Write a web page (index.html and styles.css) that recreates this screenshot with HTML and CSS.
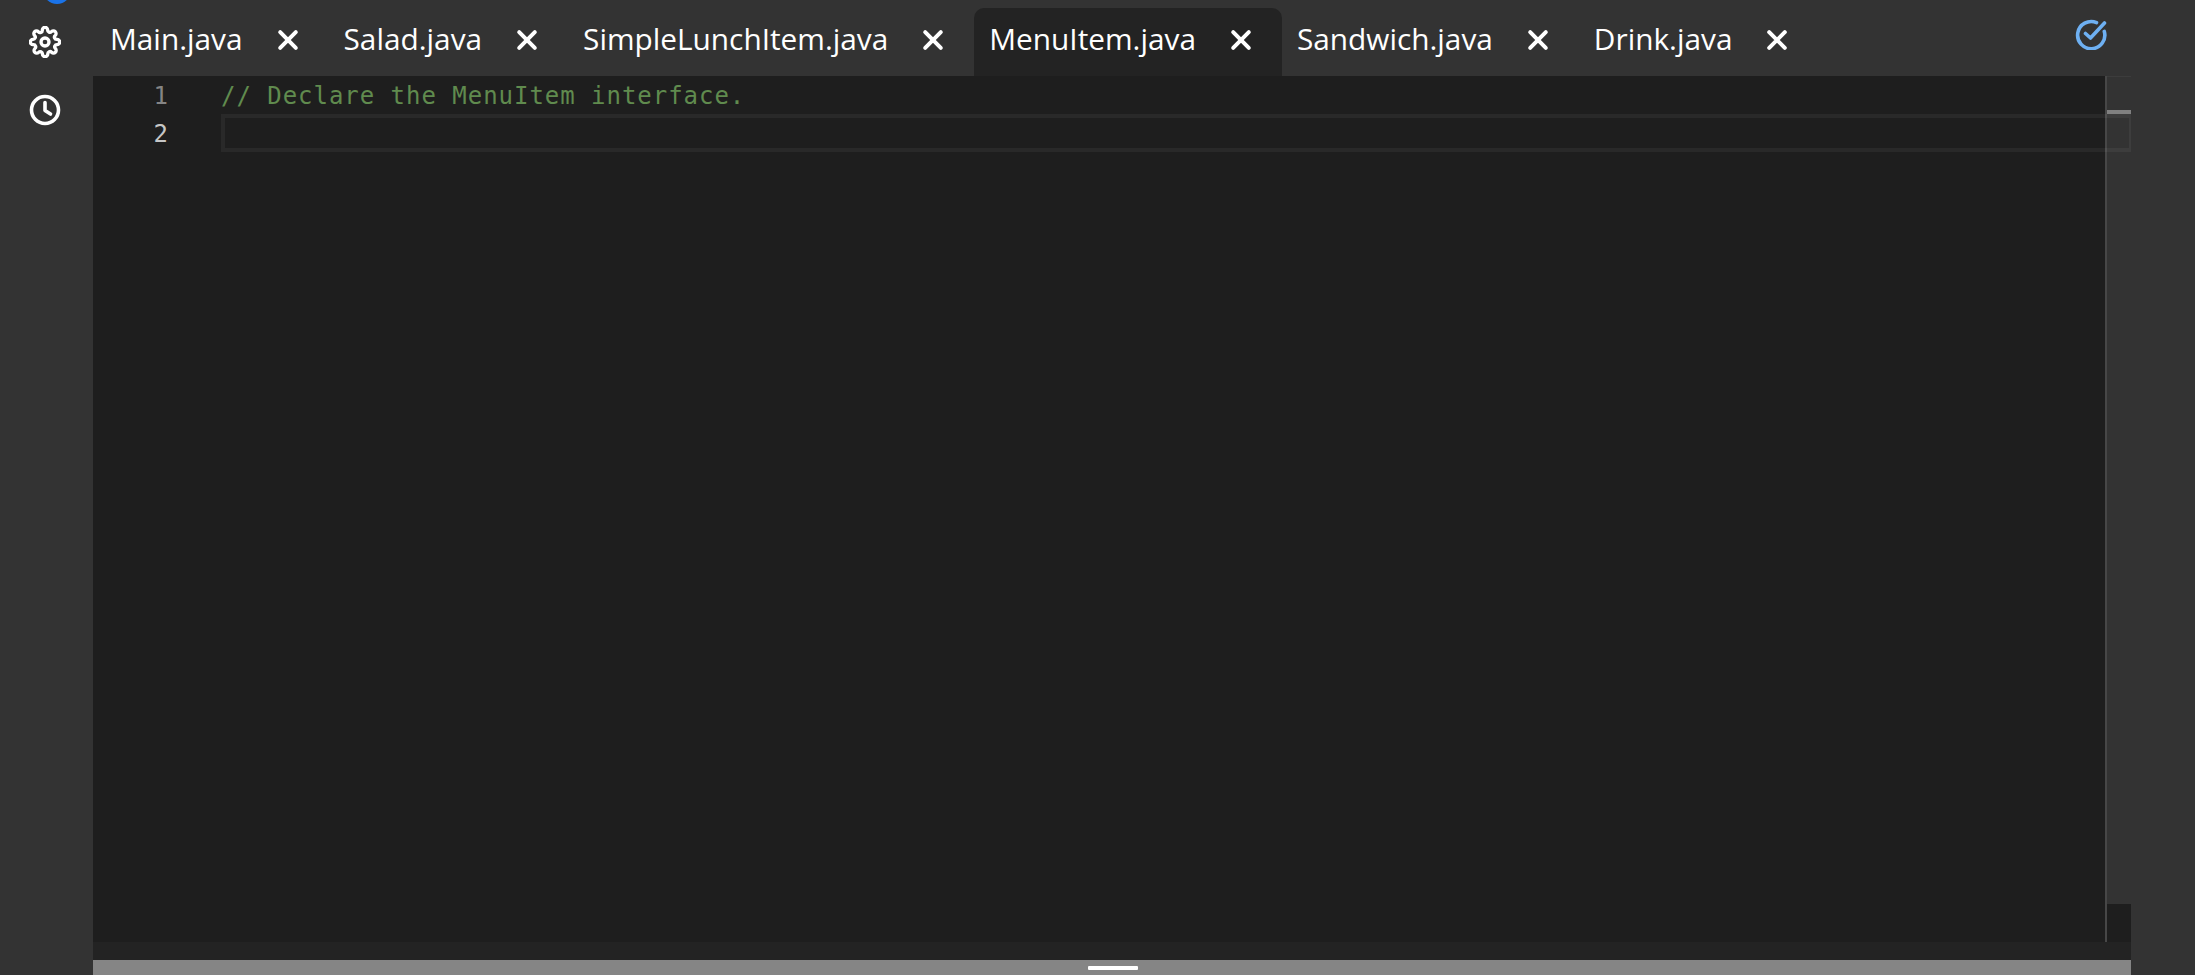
FILE: index.html
```html
<!DOCTYPE html>
<html lang="en">
<head>
<meta charset="utf-8">
<title>MenuItem.java</title>
<link rel="stylesheet" href="styles.css">
</head>
<body>
<div class="app">
  <aside class="rail">
    <span class="avatar-dot"></span>
    <svg class="rail-icon gear" viewBox="0 0 24 24" fill="none" stroke="#fff" stroke-width="2.5" stroke-linecap="round" stroke-linejoin="round"><circle cx="12" cy="12" r="3"/><path d="M19.4 15a1.65 1.65 0 0 0 .33 1.82l.06.06a2 2 0 1 1-2.83 2.83l-.06-.06a1.65 1.65 0 0 0-2.82 1.17V21a2 2 0 1 1-4 0v-.09a1.65 1.65 0 0 0-2.82-1.17l-.06.06a2 2 0 1 1-2.83-2.83l.06-.06A1.65 1.65 0 0 0 3.26 14H3a2 2 0 1 1 0-4h.09a1.65 1.65 0 0 0 1.17-2.82l-.06-.06a2 2 0 1 1 2.83-2.83l.06.06A1.65 1.65 0 0 0 10 3.26V3a2 2 0 1 1 4 0v.09a1.65 1.65 0 0 0 2.82 1.17l.06-.06a2 2 0 1 1 2.83 2.83l-.06.06A1.65 1.65 0 0 0 20.74 10H21a2 2 0 1 1 0 4h-.09a1.65 1.65 0 0 0-1.51 1z"/></svg>
    <svg class="rail-icon clock" viewBox="0 0 32 32" fill="none" stroke="#fff" stroke-width="3.6" stroke-linecap="round" stroke-linejoin="round"><circle cx="16" cy="16" r="13.5"/><path d="M16 8.5V16.5L21.5 20"/></svg>
  </aside>
  <main class="workspace">
    <nav class="tabs">
      <div class="tab"><span class="tab-name">Main.java</span><svg class="close" viewBox="0 0 20 20"><path d="M2.2 2.2L17.8 17.8M17.8 2.2L2.2 17.8"/></svg></div>
      <div class="tab"><span class="tab-name">Salad.java</span><svg class="close" viewBox="0 0 20 20"><path d="M2.2 2.2L17.8 17.8M17.8 2.2L2.2 17.8"/></svg></div>
      <div class="tab"><span class="tab-name">SimpleLunchItem.java</span><svg class="close" viewBox="0 0 20 20"><path d="M2.2 2.2L17.8 17.8M17.8 2.2L2.2 17.8"/></svg></div>
      <div class="tab active"><span class="tab-name">MenuItem.java</span><svg class="close" viewBox="0 0 20 20"><path d="M2.2 2.2L17.8 17.8M17.8 2.2L2.2 17.8"/></svg></div>
      <div class="tab"><span class="tab-name">Sandwich.java</span><svg class="close" viewBox="0 0 20 20"><path d="M2.2 2.2L17.8 17.8M17.8 2.2L2.2 17.8"/></svg></div>
      <div class="tab"><span class="tab-name">Drink.java</span><svg class="close" viewBox="0 0 20 20"><path d="M2.2 2.2L17.8 17.8M17.8 2.2L2.2 17.8"/></svg></div>
      <svg class="saved" viewBox="0 0 32 32" fill="none" stroke="#6eb0f2" stroke-width="3.6" stroke-linecap="round" stroke-linejoin="round"><path d="M21.5 4.6A13.6 13.6 0 1 0 29.3 13.4"/><path d="M10.5 15.5L15.5 20L29.5 5"/></svg>
    </nav>
    <section class="editor">
      <div class="gutter">
        <div class="line-no">1</div>
        <div class="line-no current">2</div>
      </div>
      <div class="code">
        <div class="code-line comment">// Declare the MenuItem interface.</div>
        <div class="code-line current"></div>
      </div>
      <div class="overview">
        <div class="overview-track"><span class="overview-mark"></span></div>
      </div>
    </section>
    <div class="editor-foot"></div>
    <div class="splitter"><span class="grip"></span></div>
  </main>
</div>
</body>
</html>
```
FILE: styles.css
```css
* { box-sizing: border-box; }
html, body { margin: 0; height: 100%; overflow: hidden; }
body { background: #333333; }

.app { display: flex; height: 975px; padding-right: 64px; }

.rail {
  position: relative;
  flex: 0 0 93px;
  display: flex;
  flex-direction: column;
  align-items: center;
  padding-top: 26px;
  padding-right: 3px;
}
.avatar-dot {
  position: absolute;
  left: 43px;
  top: -24px;
  width: 28px;
  height: 28px;
  border-radius: 50%;
  background: #1a73e8;
}
.rail-icon { display: block; width: 32px; height: 32px; }
.gear { margin-bottom: 36px; }

.workspace { flex: 1; min-width: 0; display: flex; flex-direction: column; }

.tabs {
  position: relative;
  flex: 0 0 76px;
  display: flex;
  align-items: stretch;
  padding: 8px 0 0 2px;
}
.tab {
  display: flex;
  align-items: center;
  padding: 0 31px 8px 15px;
  gap: 35px;
  font-family: "Open Sans", "Noto Sans", sans-serif;
  font-size: 29.8px;
  color: #ffffff;
  white-space: nowrap;
}
.tab.active { background: #232323; border-radius: 10px 10px 0 0; }
.close { width: 20px; height: 20px; margin-top: 3px; fill: none; stroke: #fff; stroke-width: 4; stroke-linecap: round; overflow: visible; }
.saved { position: absolute; right: 24px; top: 18px; width: 32px; height: 32px; }

.editor { position: relative; flex: 1; min-height: 0; display: flex; background: #1e1e1e; }
.gutter { flex: 0 0 128px; padding-right: 52px; text-align: right; }
.code { flex: 1; min-width: 0; position: relative; z-index: 1; margin-right: -26px; }
.line-no, .code-line {
  height: 38px;
  line-height: 40px;
  font-family: "DejaVu Sans Mono", "Liberation Mono", monospace;
  font-size: 24px;
  letter-spacing: .97px;
  white-space: pre;
}
.line-no { color: #858585; }
.line-no.current { color: #c6c6c6; }
.comment { color: #608b4e; }
.code-line.current { border: 4px solid rgba(255,255,255,.05); border-right-width: 2px; }

.overview { flex: 0 0 26px; border-left: 2px solid #474747; }
.overview-track { height: 828px; background: #333333; border-top: 1px solid #3c3c3c; padding-top: 33px; }
.overview-mark { display: block; height: 4px; background: #808080; }

.editor-foot { flex: 0 0 18px; background: #232323; }
.splitter { flex: 0 0 15px; background: #858585; display: flex; justify-content: center; padding-top: 6px; }
.grip { display: block; width: 50px; height: 4px; margin-left: 2px; border-radius: 1px; background: #fff; }
```
